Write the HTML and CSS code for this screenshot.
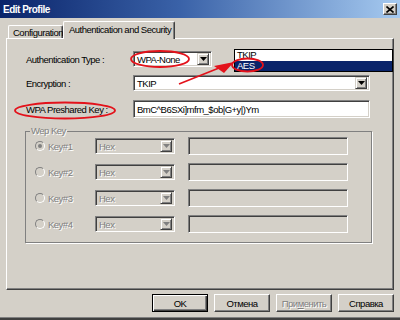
FILE: index.html
```html
<!DOCTYPE html>
<html>
<head>
<meta charset="utf-8">
<link rel="stylesheet" href="styles.css">
</head>
<body>
<div class="window">
  <div class="titlebar">
    <span class="title">Edit Profile</span>
    <span class="close"><svg width="8" height="7" viewBox="0 0 8 7"><path d="M0.5 0.5L7.5 6.5M7.5 0.5L0.5 6.5" stroke="#000" stroke-width="1.6"/></svg></span>
  </div>
  <div class="body">
    <div class="tabs">
      <div class="tab">Configuration</div>
      <div class="tab active">Authentication and Security</div>
    </div>
    <div class="panel">
      <div class="row r1">
        <span class="lbl">Authentication Type :</span>
        <div class="combo sunk w-short"><span class="val">WPA-None</span><span class="dd"><svg width="7" height="4"><path d="M0 0h7L3.5 4z" fill="#000"/></svg></span></div>
      </div>
      <div class="row r2">
        <span class="lbl">Encryption :</span>
        <div class="combo sunk w-long"><span class="val">TKIP</span><span class="dd"><svg width="7" height="4"><path d="M0 0h7L3.5 4z" fill="#000"/></svg></span></div>
      </div>
      <div class="row r3">
        <span class="lbl">WPA Preshared Key :</span>
        <div class="edit sunk w-long">BmC^B6SXi]mfm_$ob|G+y|)Ym</div>
      </div>
      <fieldset class="group">
        <legend class="dis-text">Wep Key</legend>
        <div class="keyrow">
          <span class="radio checked"></span><span class="klbl dis-text">Key#1</span>
          <div class="combo sunk hex dis"><span class="val dis-text">Hex</span><span class="dd"><svg width="7" height="4"><path d="M0 0h7L3.5 4z" fill="#808080"/></svg></span></div>
          <div class="edit sunk key dis"></div>
        </div>
        <div class="keyrow">
          <span class="radio"></span><span class="klbl dis-text">Key#2</span>
          <div class="combo sunk hex dis"><span class="val dis-text">Hex</span><span class="dd"><svg width="7" height="4"><path d="M0 0h7L3.5 4z" fill="#808080"/></svg></span></div>
          <div class="edit sunk key dis"></div>
        </div>
        <div class="keyrow">
          <span class="radio"></span><span class="klbl dis-text">Key#3</span>
          <div class="combo sunk hex dis"><span class="val dis-text">Hex</span><span class="dd"><svg width="7" height="4"><path d="M0 0h7L3.5 4z" fill="#808080"/></svg></span></div>
          <div class="edit sunk key dis"></div>
        </div>
        <div class="keyrow">
          <span class="radio"></span><span class="klbl dis-text">Key#4</span>
          <div class="combo sunk hex dis"><span class="val dis-text">Hex</span><span class="dd"><svg width="7" height="4"><path d="M0 0h7L3.5 4z" fill="#808080"/></svg></span></div>
          <div class="edit sunk key dis"></div>
        </div>
      </fieldset>
    </div>
    <div class="buttons">
      <button class="btn default">OK</button>
      <button class="btn">Отмена</button>
      <button class="btn"><span class="dis-text">При<u>м</u>енить</span></button>
      <button class="btn">Справка</button>
    </div>
  </div>
  <div class="droplist">
    <div class="opt">TKIP</div>
    <div class="opt sel">AES</div>
  </div>
  <svg class="annot" width="400" height="320" viewBox="0 0 400 320">
    <g fill="none" stroke="#e3121b" stroke-width="1.8">
      <ellipse cx="160" cy="59" rx="29" ry="8"/>
      <ellipse cx="65" cy="110.5" rx="50" ry="8"/>
      <ellipse cx="247.5" cy="65" rx="15.5" ry="6.5"/>
      <path d="M179 84L224 66"/>
    </g>
    <path d="M234 62L214 66L224 73Z" fill="#e3121b"/>
  </svg>
</div>
</body>
</html>
```
FILE: styles.css
```css
* { box-sizing: border-box; }
html, body { margin: 0; padding: 0; }
body {
  background: #d4d0c8;
  font-family: "Liberation Sans Narrow", "Liberation Sans", Arial, sans-serif;
  font-size: 9.5px;
  letter-spacing: -0.5px;
  color: #000;
}
.window {
  position: relative;
  width: 400px;
  height: 320px;
  background: #d4d0c8;
  border-bottom: 2px solid #404040;
  box-shadow: inset 0 -1px 0 #808080;
  overflow: hidden;
}
.titlebar {
  height: 18px;
  display: flex;
  align-items: center;
  padding-left: 3px;
  background: linear-gradient(to right, #0a246a 0%, #3a62a8 45%, #a6caf0 100%);
}
.title {
  color: #fff;
  font-weight: bold;
  font-size: 10px;
  letter-spacing: -0.5px;
}
.close {
  margin-left: auto;
  margin-right: 3px;
  width: 14px;
  height: 12px;
  display: flex;
  align-items: center;
  justify-content: center;
  background: #d4d0c8;
  border: 1px solid;
  border-color: #fff #404040 #404040 #fff;
  box-shadow: inset -1px -1px 0 #808080;
}
.body { padding: 3px 6px 0 6px; }
.tabs {
  height: 17px;
  display: flex;
  align-items: flex-end;
  padding-left: 2px;
}
.tab {
  height: 13px;
  line-height: 11px;
  padding: 1px 0 0 4px;
  width: 55px;
  border: 1px solid;
  border-color: #fff #404040 transparent #fff;
  border-bottom: none;
  border-radius: 2px 2px 0 0;
  box-shadow: inset -1px 0 0 #808080;
  white-space: nowrap;
}
.tab.active {
  position: relative;
  z-index: 1;
  width: 112px;
  height: 18px;
  margin-bottom: -1px;
  padding: 2px 0 0 5px;
  background: #d4d0c8;
}
.panel {
  height: 252px;
  border: 1px solid;
  border-color: #fff #404040 #404040 #fff;
  box-shadow: inset -1px -1px 0 #808080;
  padding: 12px 0 0 19px;
}
.row {
  display: flex;
  align-items: center;
}
.r1 { height: 16px; }
.r2 { height: 16px; margin-top: 8px; }
.r3 { height: 18px; margin-top: 9px; }
.lbl { width: 107px; white-space: nowrap; }
.sunk {
  border: 1px solid;
  border-color: #808080 #fff #fff #808080;
  box-shadow: inset 1px 1px 0 #404040, inset -1px -1px 0 #d4d0c8;
}
.combo {
  height: 16px;
  background: #fff;
  display: flex;
  align-items: center;
  padding: 2px 2px 2px 3px;
}
.combo .val { flex: 1; line-height: 11px; white-space: nowrap; }
.combo .dd {
  width: 12px;
  height: 12px;
  display: flex;
  align-items: center;
  justify-content: center;
  background: #d4d0c8;
  border: 1px solid;
  border-color: #d4d0c8 #404040 #404040 #d4d0c8;
  box-shadow: inset 1px 1px 0 #fff, inset -1px -1px 0 #808080;
}
.w-short { width: 79px; }
.w-long { width: 237px; }
.edit {
  height: 18px;
  background: #fff;
  padding: 3px 3px 0 3px;
  line-height: 11px;
  white-space: nowrap;
  overflow: hidden;
}
.group {
  margin: 7px 0 0 -1px;
  width: 347px;
  padding: 0 0 9px 6px;
  border: 1px solid #808080;
  box-shadow: 1px 1px 0 #fff;
}
.group legend {
  padding: 0 1px;
  margin-left: -2px;
  line-height: 12px;
  height: 12px;
}
.keyrow {
  height: 18px;
  display: flex;
  align-items: center;
  margin-bottom: 8px;
}
.keyrow:last-child { margin-bottom: 0; }
.radio {
  width: 10px;
  height: 10px;
  margin-left: 3px;
  border-radius: 50%;
  border: 1px solid;
  border-color: #808080 #fff #fff #808080;
  background: #d4d0c8;
  display: flex;
  align-items: center;
  justify-content: center;
}
.radio.checked::after {
  content: "";
  width: 4px;
  height: 4px;
  border-radius: 50%;
  background: #808080;
}
.klbl { width: 47px; margin-left: 3px; }
.dis-text { color: #808080; text-shadow: 1px 1px 0 #fff; }
.combo.dis, .edit.dis { background: #d4d0c8; }
.hex { width: 80px; }
.key { width: 160px; margin-left: 13px; }
.buttons {
  display: flex;
  justify-content: flex-end;
  gap: 6px;
  margin-top: 4px;
}
.btn {
  width: 56px;
  height: 18px;
  padding: 0;
  font: inherit;
  letter-spacing: inherit;
  color: #000;
  background: #d4d0c8;
  border: 1px solid;
  border-color: #fff #404040 #404040 #fff;
  box-shadow: inset -1px -1px 0 #808080;
}
.btn.default {
  border-color: #000;
  box-shadow: inset 1px 1px 0 #fff, inset -1px -1px 0 #404040, inset -2px -2px 0 #808080;
}
.btn u { text-decoration: underline; }
.droplist {
  position: absolute;
  left: 234px;
  top: 49px;
  width: 159px;
  height: 23px;
  border: 1px solid #000;
  background: #fff;
}
.opt {
  height: 10.5px;
  line-height: 10px;
  padding-left: 2px;
}
.opt.sel { background: #0a246a; color: #fff; }
.annot {
  position: absolute;
  left: 0;
  top: 0;
  pointer-events: none;
}
```
